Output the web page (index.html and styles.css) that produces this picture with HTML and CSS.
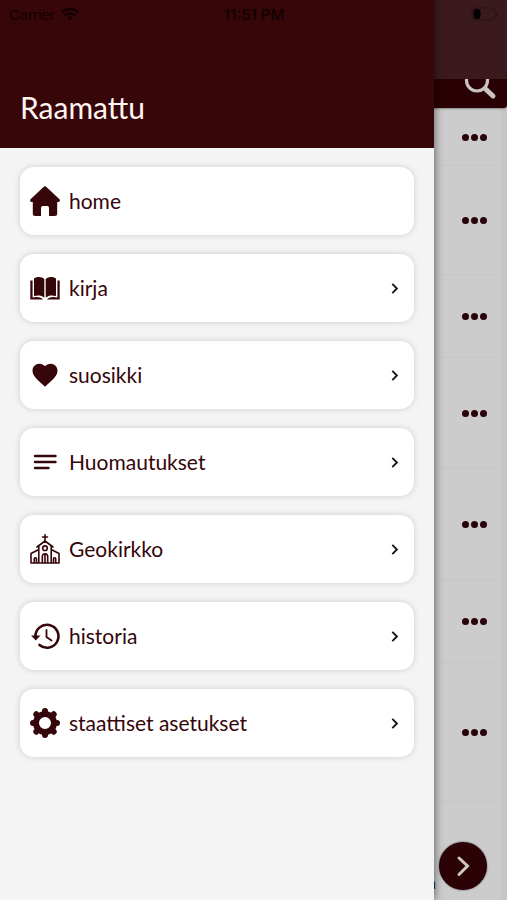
FILE: index.html
```html
<!DOCTYPE html>
<html lang="fi">
<head>
<meta charset="utf-8">
<meta name="viewport" content="width=device-width, initial-scale=1">
<title>Raamattu</title>
<link rel="stylesheet" href="styles.css">
</head>
<body>
<div class="screen">
  <main class="page">
    <header class="page-header">
      <button class="icon-button search" aria-label="Haku">
        <svg width="34" height="34" viewBox="0 0 34 34" fill="none" stroke="#c9c3c1"><circle cx="14" cy="12.500" r="10.500" stroke-width="3.200"/><path d="M22.500 21l7.500 7" stroke-width="5" stroke-linecap="round"/></svg>
      </button>
    </header>
    <ul class="verses">
      <li class="verse h57"><button class="dots" aria-label="Lisää"><i></i><i></i><i></i></button></li>
      <li class="verse h109"><button class="dots" aria-label="Lisää"><i></i><i></i><i></i></button></li>
      <li class="verse h83"><button class="dots" aria-label="Lisää"><i></i><i></i><i></i></button></li>
      <li class="verse h111"><button class="dots" aria-label="Lisää"><i></i><i></i><i></i></button></li>
      <li class="verse h111"><button class="dots" aria-label="Lisää"><i></i><i></i><i></i></button></li>
      <li class="verse h83"><button class="dots" aria-label="Lisää"><i></i><i></i><i></i></button></li>
      <li class="verse h139"><button class="dots" aria-label="Lisää"><i></i><i></i><i></i></button></li>
    </ul>
    <footer class="page-footer">
      <span>a</span>
      <button class="next" aria-label="Seuraava">
        <svg width="24" height="24" viewBox="0 0 24 24" fill="none" stroke="#d0c6c2" stroke-width="3" stroke-linecap="round"><path d="M8 4l8.500 8L8 20.500"/></svg>
      </button>
    </footer>
  </main>

  <aside class="drawer">
    <header class="drawer-header"><h1>Raamattu</h1></header>
    <nav class="menu">
      <a class="card" href="#home">
        <svg class="icon" viewBox="0 0 30 30"><path d="M13.300 1.200a2.400 2.400 0 0 1 3.400 0L29.200 13c1.300 1.300.7 3-1 3h-1v11.500a2.500 2.500 0 0 1-2.500 2.500H19v-8.300a1.700 1.700 0 0 0-1.700-1.700h-4.600a1.700 1.700 0 0 0-1.700 1.700V30H5.300a2.500 2.500 0 0 1-2.500-2.500V16h-1c-1.700 0-2.300-1.700-1-3z"/></svg>
        <span>home</span>
      </a>
      <a class="card" href="#kirja">
        <svg class="icon" viewBox="0 0 30 30"><path d="M4 5.500c4-2.200 8-1.700 10.300.6v18.500C11.300 22.200 8 22 4 23zM26 5.500c-4-2.200-8-1.700-10.300.6v18.500c3-2.400 6.300-2.600 10.300-1.600z"/><path d="M.3 7.500H2.600V24.600c4-1 7.500-.8 10.500 1.900H.3zM29.700 7.500H27.400V24.600c-4-1-7.500-.8-10.500 1.900H29.700z"/></svg>
        <span>kirja</span>
        <svg class="chevron" viewBox="0 0 10 10"><path d="M3 .8l4.200 4.200L3 9.200"/></svg>
      </a>
      <a class="card" href="#suosikki">
        <svg class="icon" viewBox="0 0 24 24"><path d="M12 21.350l-1.450-1.320C5.400 15.360 2 12.280 2 8.500 2 5.420 4.420 3 7.500 3c1.740 0 3.410.81 4.500 2.090C13.090 3.810 14.760 3 16.500 3 19.580 3 22 5.420 22 8.500c0 3.780-3.400 6.860-8.550 11.540z"/></svg>
        <span>suosikki</span>
        <svg class="chevron" viewBox="0 0 10 10"><path d="M3 .8l4.200 4.200L3 9.200"/></svg>
      </a>
      <a class="card" href="#huomautukset">
        <svg class="icon line" viewBox="0 0 30 30" stroke-width="2.400" stroke-linecap="round"><path d="M5 9h20.500M5 15h20.500M5 21h13.500"/></svg>
        <span>Huomautukset</span>
        <svg class="chevron" viewBox="0 0 10 10"><path d="M3 .8l4.200 4.200L3 9.200"/></svg>
      </a>
      <a class="card" href="#geokirkko">
        <svg class="icon line" viewBox="0 0 30 30" stroke-width="1.600" stroke-linejoin="round" stroke-linecap="round"><path d="M15 .8v6.200M12.500 3h5M7 13l8-6 8 6M8.800 12v17M21.200 12v17M1 29V19.500l7.800-4M29 29V19.500l-7.800-4M1 29h28M12.300 29v-6.500a2.700 2.700 0 0 1 5.400 0V29M15 20v9M4.300 29v-4.500a1.200 1.200 0 0 1 2.200 0V29M23.500 29v-4.500a1.200 1.200 0 0 1 2.200 0V29"/><circle cx="15" cy="14.200" r="2.300"/></svg>
        <span>Geokirkko</span>
        <svg class="chevron" viewBox="0 0 10 10"><path d="M3 .8l4.200 4.200L3 9.200"/></svg>
      </a>
      <a class="card" href="#historia">
        <svg class="icon line" viewBox="0 0 30 30"><path d="M5.500 16A11.500 11.500 0 1 1 9.500 24" stroke-width="2.600" stroke-linecap="round"/><path d="M16.500 9v7l5 3.500" stroke-width="1.800" stroke-linecap="round"/><path d="M1 14.500h9.500l-4.700 5z" fill="#35060a" stroke="none"/></svg>
        <span>historia</span>
        <svg class="chevron" viewBox="0 0 10 10"><path d="M3 .8l4.200 4.200L3 9.200"/></svg>
      </a>
      <a class="card" href="#asetukset">
        <svg class="icon" viewBox="0 0 30 30"><circle cx="15" cy="15" r="9" fill="none" stroke="#35060a" stroke-width="6"/><g stroke="#35060a" stroke-width="6" stroke-linecap="round"><path d="M15 3v2M15 25v2M3 15h2M25 15h2M6.300 6.300l1 1M22.700 22.700l1 1M6.300 23.700l1-1M22.700 7.300l1-1"/></g></svg>
        <span>staattiset asetukset</span>
        <svg class="chevron" viewBox="0 0 10 10"><path d="M3 .8l4.200 4.200L3 9.200"/></svg>
      </a>
    </nav>
  </aside>

  <div class="status">
    <div class="carrier"><span>Carrier</span>
      <svg width="18" height="14" viewBox="0 0 18 14" fill="none" stroke="#130103" stroke-width="2.600"><path d="M1 5.200a11.500 11.500 0 0 1 16 0M4 8.500a7.200 7.200 0 0 1 10 0"/><path d="M6.300 10.500a4 4 0 0 1 5.400 0L9 13.500z" fill="#130103" stroke="none"/></svg>
    </div>
    <time>11:51 PM</time>
    <svg class="battery" width="28" height="14" viewBox="0 0 28 14"><rect x="1" y="1" width="23" height="12" rx="3.500" fill="none" stroke="#2d1114"/><rect x="2.500" y="2" width="7" height="10" rx="3" fill="#050001"/><path d="M26 5v4" stroke="#2d1114" stroke-width="1.500"/></svg>
  </div>
</div>
</body>
</html>
```
FILE: styles.css
```css
* { box-sizing: border-box; }
body { margin: 0; font-family: Lato, "Liberation Sans", sans-serif; color: #35060a; }
button { padding: 0; border: 0; background: none; font: inherit; color: inherit; }
h1, ul { margin: 0; padding: 0; }

.screen { position: relative; min-height: 100vh; overflow: hidden; background: #ccc; }

.page { display: flex; flex-direction: column; min-height: 100vh; border-right: 6px solid #c6c6c6; }
.page-header {
  display: flex; align-items: flex-end; justify-content: flex-end;
  height: 108px; margin-right: -6px; padding: 0 10px 6px;
  background: linear-gradient(#3b1a1e 79px, #290003 79px);
  border-bottom-right-radius: 3px;
  box-shadow: 0 1px 2px #888;
}
.search { height: 23px; overflow: hidden; display: flex; align-items: flex-end; }
.verses { list-style: none; padding-right: 3px; padding-top: 1px; }
.verse {
  display: flex; align-items: center; justify-content: flex-end;
  padding-right: 11px; border-bottom: 1px solid #c6c6c6;
}
.h57 { height: 57px; }
.h83 { height: 83px; }
.h109 { height: 109px; }
.h111 { height: 111px; }
.h139 { height: 139px; }
.dots { display: flex; gap: 2px; }
.dots i { width: 7px; height: 7px; border-radius: 50%; background: #29030a; }
.page-footer {
  flex: 1; display: flex; align-items: flex-end; justify-content: flex-end; gap: 3px;
  padding: 0 14px 10px 0; font-size: 17px; line-height: 14px; color: #111;
}
.next {
  display: flex; align-items: center; justify-content: center;
  width: 48px; height: 48px; border-radius: 50%; background: #2b0206;
  box-shadow: 0 0 2px #555;
}

.drawer {
  position: absolute; top: 0; bottom: 0; left: 0; width: calc(100% - 73px);
  background: #f4f4f4; box-shadow: 1px 0 8px rgba(0, 0, 0, 0.500);
}
.drawer-header {
  display: flex; align-items: flex-end; height: 148px; padding: 0 20px 23px;
  background: #370609;
}
.drawer-header h1 { font-size: 30px; line-height: 36px; font-weight: 400; color: #fff5f0; }
.menu { display: flex; flex-direction: column; gap: 19px; padding: 19px 20px; }
.card {
  display: flex; align-items: center; gap: 9px; height: 68px; padding: 0 14px 0 10px;
  border-radius: 14px; background: #fff; box-shadow: 0 0 6px rgba(0, 0, 0, 0.160);
  color: #35060a; font-size: 21px; line-height: 28px; text-decoration: none;
}
.card span { flex: 1; }
.icon { width: 30px; height: 30px; fill: #35060a; }
.line { fill: none; stroke: #35060a; }
.chevron { width: 11px; height: 11px; fill: none; stroke: #161616; stroke-width: 1.700; }

.status {
  position: absolute; top: 0; left: 0; right: 0;
  display: grid; grid-template-columns: 1fr auto 1fr; align-items: center;
  height: 28px; padding: 0 8px 0 9px;
  font-family: "Liberation Sans", sans-serif; font-size: 15px; color: #130103;
}
.carrier { display: flex; align-items: center; gap: 6px; }
.status time { font-family: Inter, "Liberation Sans", sans-serif; font-weight: 600; }
.battery { justify-self: end; }
```
